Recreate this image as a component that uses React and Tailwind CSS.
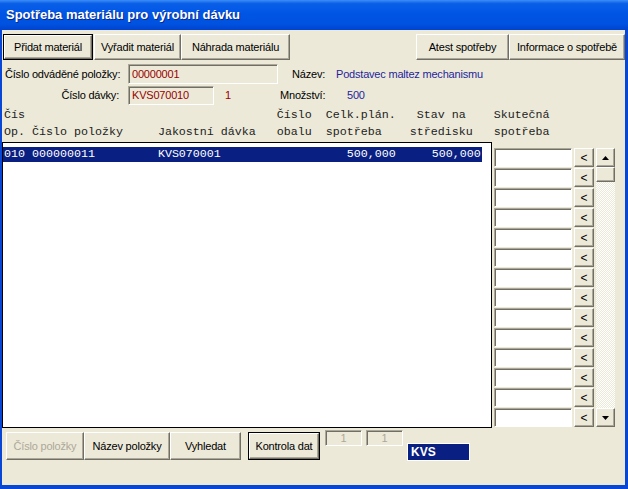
import React from "react";

const raised =
  "flex items-center justify-center bg-[#ece9d8] border border-t-white border-l-white border-r-[#716f64] border-b-[#716f64] shadow-[inset_-1px_-1px_0_#aca899]";
const sunken =
  "border border-t-[#aca899] border-l-[#aca899] border-b-white border-r-white shadow-[inset_1px_1px_0_#716f64]";
const mono = "font-['Liberation_Mono','Courier_New',monospace] text-[11.66px] tracking-normal whitespace-pre";

// header line text, columns at 7px per character
const pad = (parts) =>
  parts.reduce((acc, [col, txt]) => acc.padEnd(col, " ") + txt, "");
const headLine1 = pad([[0, "Čís"], [39, "Číslo"], [46, "Celk.plán."], [59, "Stav na"], [70, "Skutečná"]]);
const headLine2 = pad([
  [0, "Op. Číslo položky"],
  [22, "Jakostní dávka"],
  [39, "obalu"],
  [46, "spotřeba"],
  [58, "středisku"],
  [70, "spotřeba"],
]);
const dataLine = pad([[0, "010 000000011"], [22, "KVS070001"], [49, "500,000"]]);

function Button({ w, h = "h-[26px]", children, isDefault, disabled }) {
  if (isDefault) {
    return (
      <div className={`${w} ${h} border border-black flex`}>
        <div className={`${raised} flex-1`}>{children}</div>
      </div>
    );
  }
  return (
    <div className={`${raised} ${w} ${h} ${disabled ? "text-[#aca899]" : ""}`}>
      {children}
    </div>
  );
}

function Arrow({ down }) {
  return (
    <svg width="7" height="4" viewBox="0 0 7 4">
      {down ? <path d="M0 0h7L3.5 4z" fill="#000" /> : <path d="M0 4h7L3.5 0z" fill="#000" />}
    </svg>
  );
}

export default function App() {
  const rows = Array.from({ length: 14 });
  return (
    <div className="w-[628px] h-[489px] flex flex-col overflow-hidden font-['Liberation_Sans',Arial,sans-serif] text-[11px] tracking-[-0.2px] text-black">
      {/* Title bar */}
      <div className="h-[30px] shrink-0 flex items-center pl-[6px] bg-[linear-gradient(to_bottom,#3d8ef8_0%,#0a5fe8_12%,#0055e5_45%,#0052e0_80%,#0043cf_100%)]">
        <span className="text-white font-bold text-[13px] tracking-[0px] [text-shadow:1px_1px_0_#0a2a8a]">
          Spotřeba materiálu pro výrobní dávku
        </span>
      </div>

      {/* Client area */}
      <div className="flex-1 flex flex-col bg-[#ece9d8] border-l-2 border-r-[3px] border-b-4 border-[#0846d6]">
        {/* Toolbar buttons */}
        <div className="mt-[4px] h-[26px] flex justify-between pl-[1px]">
          <div className="flex">
            <Button w="w-[90px]" isDefault>Přidat materiál</Button>
            <div className="ml-[1px] flex">
              <Button w="w-[87px]">Vyřadit materiál</Button>
              <Button w="w-[109px]">Náhrada materiálu</Button>
            </div>
          </div>
          <div className="flex">
            <Button w="w-[93px]">Atest spotřeby</Button>
            <Button w="w-[116px]">Informace o spotřebě</Button>
          </div>
        </div>

        {/* Row 1 */}
        <div className="mt-[4px] h-[20px] flex items-center">
          <span className="w-[126px] pl-[3px]">Číslo odváděné položky:</span>
          <div className={`${sunken} w-[150px] h-[20px] bg-[#ece9d8] flex items-center pl-[3px] text-[#990000]`}>
            00000001
          </div>
          <span className="ml-[14px] w-[44px]">Název:</span>
          <span className="text-[#1f1f9c]">Podstavec maltez mechanismu</span>
        </div>

        {/* Row 2 */}
        <div className="mt-[2px] h-[19px] flex items-center">
          <span className="w-[126px] pr-[9px] text-right">Číslo dávky:</span>
          <div className={`${sunken} w-[86px] h-[19px] bg-[#ece9d8] flex items-center pl-[3px] text-[#990000]`}>
            KVS070010
          </div>
          <span className="ml-[11px] w-[55px] text-[#990000]">1</span>
          <span className="w-[67px]">Množství:</span>
          <span className="text-[#1f1f9c]">500</span>
        </div>

        {/* Column header */}
        <div className={`${mono} mt-[2px] pl-[2px] leading-[17px] h-[34px] text-[#222]`}>
          <div>{headLine1}</div>
          <div>{headLine2}</div>
        </div>

        {/* List + side inputs */}
        <div className="mt-[1px] h-[286px] flex">
          <div className="w-[490px] h-full border border-black bg-white">
            <div className={`${mono} mt-[4px] w-[479px] h-[15px] leading-[15px] pl-[1px] bg-[#0a1f82] text-white`}>
              {dataLine}
              <span className="ml-[36px]">500,000</span>
            </div>
          </div>

          <div className="ml-[2px] pt-[6px] flex flex-col gap-[1px]">
            {rows.map((_, i) => (
              <div key={i} className={`${sunken} w-[78px] h-[19px] bg-white`} />
            ))}
          </div>

          <div className="ml-[2px] pt-[6px] flex flex-col gap-[1px]">
            {rows.map((_, i) => (
              <div key={i} className={`${raised} w-[20px] h-[19px] text-[12px]`}>
                &lt;
              </div>
            ))}
          </div>

          <div className="ml-[2px] mt-[6px] w-[19px] h-[279px] flex flex-col">
            <div className={`${raised} h-[19px]`}>
              <Arrow />
            </div>
            <div className={`${raised} h-[15px]`} />
            <div className="flex-1 bg-[repeating-conic-gradient(#ece9d8_0_25%,#ffffff_0_50%)] bg-[length:2px_2px]" />
            <div className={`${raised} h-[19px]`}>
              <Arrow down />
            </div>
          </div>
        </div>

        {/* Bottom row */}
        <div className="flex items-start">
          <div className="ml-[4px] mt-[4px] flex">
            <Button w="w-[78px]" h="h-[28px]" disabled>Číslo položky</Button>
            <Button w="w-[86px]" h="h-[28px]">Název položky</Button>
            <Button w="w-[71px]" h="h-[28px]">Vyhledat</Button>
          </div>
          <div className="ml-[7px] mt-[4px] flex">
            <Button w="w-[72px]" h="h-[28px]" isDefault>Kontrola dat</Button>
          </div>
          <div className={`${sunken} ml-[5px] mt-[2px] w-[37px] h-[16px] flex items-center justify-center text-[#aca899]`}>
            1
          </div>
          <div className={`${sunken} ml-[4px] mt-[2px] w-[37px] h-[16px] flex items-center justify-center text-[#aca899]`}>
            1
          </div>
          <div className="ml-[4px] mt-[15px] w-[63px] h-[18px] border border-white bg-[#0a1f82] text-white font-bold text-[12px] tracking-[0px] flex items-center pl-[3px]">
            KVS
          </div>
        </div>
      </div>
    </div>
  );
}
